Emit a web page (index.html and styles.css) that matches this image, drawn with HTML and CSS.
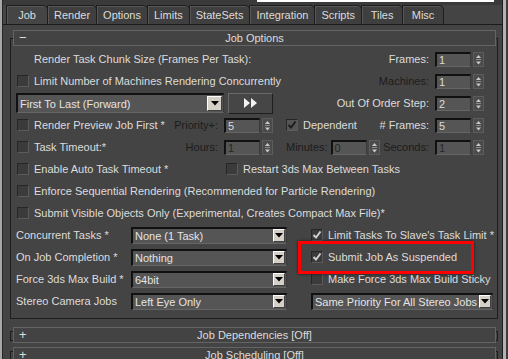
FILE: index.html
```html
<!DOCTYPE html>
<html lang="en">
<head>
  <meta charset="UTF-8" />
  <title>Job Options</title>
  <link rel="stylesheet" href="styles.css">
</head>
<body>
  <div class="app">
    <div class="edge-left"></div>
    <div class="main">
      <div class="topline"><span class="topline-white"></span></div>
      <div class="tabs">
        <div class="tab active">Job</div>
        <div class="tab">Render</div>
        <div class="tab">Options</div>
        <div class="tab">Limits</div>
        <div class="tab">StateSets</div>
        <div class="tab">Integration</div>
        <div class="tab">Scripts</div>
        <div class="tab">Tiles</div>
        <div class="tab">Misc</div>
      </div>
      <div class="panel">
        <div class="rollout">
          <div class="rollout-head"><span class="sign">&minus;</span><span class="title">Job Options</span></div>
          <div class="rollout-body">

            <div class="row">
              <span class="cb-space"></span>
              <span class="lbl">Render Task Chunk Size (Frames Per Task):</span>
              <div class="spin push">
                <span class="spin-lbl">Frames:</span><span class="num">1</span>
                <svg class="arrows" width="11" height="15" viewBox="0 0 11 15"><rect width="11" height="15" fill="#4b4b4b"/><rect x="0.5" y="0.5" width="10" height="14" fill="none" stroke="#5c5c5c"/><polygon points="3,6 8,6 5.5,3" fill="#c9c9c9"/><line x1="3" y1="7.5" x2="8" y2="7.5" stroke="#8a8a8a"/><polygon points="3,9.5 8,9.5 5.5,12.5" fill="#c9c9c9"/></svg>
              </div>
            </div>

            <div class="row">
              <span class="cb"></span>
              <span class="lbl">Limit Number of Machines Rendering Concurrently</span>
              <div class="spin push">
                <span class="spin-lbl dim">Machines:</span><span class="num">1</span>
                <svg class="arrows" width="11" height="15" viewBox="0 0 11 15"><rect width="11" height="15" fill="#4b4b4b"/><rect x="0.5" y="0.5" width="10" height="14" fill="none" stroke="#5c5c5c"/><polygon points="3,6 8,6 5.5,3" fill="#c9c9c9"/><line x1="3" y1="7.5" x2="8" y2="7.5" stroke="#8a8a8a"/><polygon points="3,9.5 8,9.5 5.5,12.5" fill="#c9c9c9"/></svg>
              </div>
            </div>

            <div class="row">
              <div class="select order">
                <span class="select-text">First To Last (Forward)</span>
                <span class="drop-btn big"><svg width="8" height="5" viewBox="0 0 8 5"><polygon points="0,0 8,0 4,4.5" fill="#000"/></svg></span>
              </div>
              <div class="ff-btn">
                <svg width="16" height="10" viewBox="0 0 16 10"><polygon points="1,0 7,5 1,10" fill="#f2f2f2"/><polygon points="8,0 14,5 8,10" fill="#f2f2f2"/></svg>
              </div>
              <div class="spin push">
                <span class="spin-lbl">Out Of Order Step:</span><span class="num">2</span>
                <svg class="arrows" width="11" height="15" viewBox="0 0 11 15"><rect width="11" height="15" fill="#4b4b4b"/><rect x="0.5" y="0.5" width="10" height="14" fill="none" stroke="#5c5c5c"/><polygon points="3,6 8,6 5.5,3" fill="#c9c9c9"/><line x1="3" y1="7.5" x2="8" y2="7.5" stroke="#8a8a8a"/><polygon points="3,9.5 8,9.5 5.5,12.5" fill="#c9c9c9"/></svg>
              </div>
            </div>

            <div class="row">
              <div class="lead">
                <span class="cb"></span>
                <span class="lbl">Render Preview Job First *</span>
                <div class="spin push">
                  <span class="spin-lbl dim">Priority+:</span><span class="num">5</span>
                  <svg class="arrows" width="11" height="15" viewBox="0 0 11 15"><rect width="11" height="15" fill="#4b4b4b"/><rect x="0.5" y="0.5" width="10" height="14" fill="none" stroke="#5c5c5c"/><polygon points="3,6 8,6 5.5,3" fill="#c9c9c9"/><line x1="3" y1="7.5" x2="8" y2="7.5" stroke="#8a8a8a"/><polygon points="3,9.5 8,9.5 5.5,12.5" fill="#c9c9c9"/></svg>
                </div>
              </div>
              <span class="cb checked off dep"><svg width="10" height="10" viewBox="0 0 10 10"><polyline points="1.5,5 4,7.5 8.5,1.5" fill="none" stroke="#1e1e1e" stroke-width="2"/></svg></span>
              <span class="lbl">Dependent</span>
              <div class="spin push">
                <span class="spin-lbl"># Frames:</span><span class="num">5</span>
                <svg class="arrows" width="11" height="15" viewBox="0 0 11 15"><rect width="11" height="15" fill="#4b4b4b"/><rect x="0.5" y="0.5" width="10" height="14" fill="none" stroke="#5c5c5c"/><polygon points="3,6 8,6 5.5,3" fill="#c9c9c9"/><line x1="3" y1="7.5" x2="8" y2="7.5" stroke="#8a8a8a"/><polygon points="3,9.5 8,9.5 5.5,12.5" fill="#c9c9c9"/></svg>
              </div>
            </div>

            <div class="row">
              <div class="lead">
                <span class="cb"></span>
                <span class="lbl">Task Timeout:*</span>
                <div class="spin push">
                  <span class="spin-lbl dim">Hours:</span><span class="num dim">1</span>
                  <svg class="arrows" width="11" height="15" viewBox="0 0 11 15"><rect width="11" height="15" fill="#4b4b4b"/><rect x="0.5" y="0.5" width="10" height="14" fill="none" stroke="#5c5c5c"/><polygon points="3,6 8,6 5.5,3" fill="#c9c9c9"/><line x1="3" y1="7.5" x2="8" y2="7.5" stroke="#8a8a8a"/><polygon points="3,9.5 8,9.5 5.5,12.5" fill="#c9c9c9"/></svg>
                </div>
              </div>
              <div class="spin minutes">
                <span class="spin-lbl dim">Minutes:</span><span class="num dim">0</span>
                <svg class="arrows" width="11" height="15" viewBox="0 0 11 15"><rect width="11" height="15" fill="#4b4b4b"/><rect x="0.5" y="0.5" width="10" height="14" fill="none" stroke="#5c5c5c"/><polygon points="3,6 8,6 5.5,3" fill="#c9c9c9"/><line x1="3" y1="7.5" x2="8" y2="7.5" stroke="#8a8a8a"/><polygon points="3,9.5 8,9.5 5.5,12.5" fill="#c9c9c9"/></svg>
              </div>
              <div class="spin push">
                <span class="spin-lbl dim">Seconds:</span><span class="num dim">1</span>
                <svg class="arrows" width="11" height="15" viewBox="0 0 11 15"><rect width="11" height="15" fill="#4b4b4b"/><rect x="0.5" y="0.5" width="10" height="14" fill="none" stroke="#5c5c5c"/><polygon points="3,6 8,6 5.5,3" fill="#c9c9c9"/><line x1="3" y1="7.5" x2="8" y2="7.5" stroke="#8a8a8a"/><polygon points="3,9.5 8,9.5 5.5,12.5" fill="#c9c9c9"/></svg>
              </div>
            </div>

            <div class="row">
              <div class="lead short">
                <span class="cb"></span>
                <span class="lbl">Enable Auto Task Timeout *</span>
              </div>
              <span class="cb"></span>
              <span class="lbl">Restart 3ds Max Between Tasks</span>
            </div>

            <div class="row">
              <span class="cb"></span>
              <span class="lbl">Enforce Sequential Rendering (Recommended for Particle Rendering)</span>
            </div>

            <div class="row">
              <span class="cb"></span>
              <span class="lbl">Submit Visible Objects Only (Experimental, Creates Compact Max File)*</span>
            </div>

            <div class="row">
              <span class="row-label">Concurrent Tasks *</span>
              <div class="select">
                <span class="select-text">None (1 Task)</span>
                <span class="drop-btn"><svg width="8" height="5" viewBox="0 0 8 5"><polygon points="0,0 8,0 4,4.5" fill="#000"/></svg></span>
              </div>
              <div class="opt">
                <span class="cb checked"><svg width="10" height="10" viewBox="0 0 10 10"><polyline points="1.5,5 4,7.5 8.5,1.5" fill="none" stroke="#cfcfcf" stroke-width="2"/></svg></span>
                <span class="lbl">Limit Tasks To Slave's Task Limit *</span>
              </div>
            </div>

            <div class="row">
              <span class="row-label">On Job Completion *</span>
              <div class="select">
                <span class="select-text">Nothing</span>
                <span class="drop-btn"><svg width="8" height="5" viewBox="0 0 8 5"><polygon points="0,0 8,0 4,4.5" fill="#000"/></svg></span>
              </div>
              <div class="opt flagged">
                <span class="cb checked"><svg width="10" height="10" viewBox="0 0 10 10"><polyline points="1.5,5 4,7.5 8.5,1.5" fill="none" stroke="#cfcfcf" stroke-width="2"/></svg></span>
                <span class="lbl">Submit Job As Suspended</span>
              </div>
            </div>

            <div class="row">
              <span class="row-label">Force 3ds Max Build *</span>
              <div class="select">
                <span class="select-text">64bit</span>
                <span class="drop-btn"><svg width="8" height="5" viewBox="0 0 8 5"><polygon points="0,0 8,0 4,4.5" fill="#000"/></svg></span>
              </div>
              <div class="opt">
                <span class="cb"></span>
                <span class="lbl">Make Force 3ds Max Build Sticky</span>
              </div>
            </div>

            <div class="row">
              <span class="row-label">Stereo Camera Jobs</span>
              <div class="select">
                <span class="select-text">Left Eye Only</span>
                <span class="drop-btn"><svg width="8" height="5" viewBox="0 0 8 5"><polygon points="0,0 8,0 4,4.5" fill="#000"/></svg></span>
              </div>
              <div class="select stereo">
                <span class="select-text">Same Priority For All Stereo Jobs</span>
                <span class="drop-btn"><svg width="8" height="5" viewBox="0 0 8 5"><polygon points="0,0 8,0 4,4.5" fill="#000"/></svg></span>
              </div>
            </div>

          </div>
        </div>

        <div class="rollout collapsed">
          <div class="rollout-head"><span class="sign">+</span><span class="title">Job Dependencies [Off]</span></div>
          <div class="rollout-body"></div>
        </div>
        <div class="rollout collapsed">
          <div class="rollout-head"><span class="sign">+</span><span class="title">Job Scheduling [Off]</span></div>
          <div class="rollout-body"></div>
        </div>
      </div>
    </div>
    <div class="edge-right"></div>
  </div>
</body>
</html>
```

FILE: styles.css
```css
html, body {
  margin: 0;
  padding: 0;
}
body {
  width: 508px;
  height: 359px;
  overflow: hidden;
  background-color: #444;
  font-family: "Liberation Sans", Arial, sans-serif;
  font-size: 11px;
  color: #dcdcdc;
}
.app {
  display: flex;
  height: 359px;
}
.edge-left {
  width: 2px;
  flex-shrink: 0;
  background-color: #a8a8a8;
}
.main {
  flex: 1;
  min-width: 0;
  border-left: 1px solid #262626;
}
.edge-right {
  width: 3px;
  flex-shrink: 0;
  border-left: 1px solid #1e1e1e;
  border-right: 2px solid #3c3c3c;
  background-color: #b2b2b2;
}
.topline {
  height: 5px;
  display: flex;
  justify-content: flex-end;
  padding-right: 8px;
  background-color: #3a3a3a;
}
.topline-white {
  width: 237px;
  height: 2px;
  background-color: #fff;
}

/* tabs */
.tabs {
  display: flex;
  height: 19px;
  padding-left: 3px;
  border-bottom: 1px solid #1b1b1b;
}
.tab {
  min-width: 42px;
  padding: 0 6px;
  box-sizing: border-box;
  text-align: center;
  line-height: 18px;
  background-color: #3f3f3f;
  border: 1px solid #1e1e1e;
  border-bottom: none;
  border-top-right-radius: 5px;
  box-shadow: inset 1px 1px 0 #575757;
  margin-right: -1px;
  color: #dcdcdc;
}
.tab.active {
  background-color: #454545;
}

/* rollouts */
.panel {
  padding-top: 5px;
}
.rollout {
  margin: 0 4px 0 7px;
}
.rollout-head {
  position: relative;
  z-index: 1;
  height: 16px;
  margin: 0 2px 0 3px;
  box-sizing: border-box;
  border: 1px solid #646464;
  background-color: #434343;
  display: flex;
  align-items: center;
}
.rollout-head .sign {
  width: 14px;
  padding-left: 5px;
  font-size: 13px;
  line-height: 14px;
}
.rollout-head .title {
  flex: 1;
  text-align: center;
  margin-right: 19px;
}
.rollout-body {
  margin-top: -8px;
  border: 1px solid #1d1d1d;
  padding: 9px 13px 6px 6px;
}
.rollout.collapsed {
  margin-top: 8px;
}
.rollout.collapsed + .rollout.collapsed {
  margin-top: 6px;
}
.rollout.collapsed .rollout-body {
  margin-top: -12px;
  height: 8px;
  padding: 0;
}

/* rows */
.row {
  display: flex;
  align-items: center;
  height: 22px;
  white-space: nowrap;
}
.lead {
  display: flex;
  align-items: center;
  width: 256px;
  flex-shrink: 0;
}
.lead.short {
  width: 209px;
}
.push {
  margin-left: auto;
}
.lbl {
  color: #dcdcdc;
}
.dim {
  color: #1c1c1c;
}
.cb-space {
  width: 12px;
  margin-right: 5px;
}
.cb {
  width: 12px;
  height: 12px;
  margin-right: 5px;
  flex-shrink: 0;
  box-sizing: border-box;
  background-color: #3b3b3b;
  border: 1px solid;
  border-color: #262626 #5b5b5b #5b5b5b #262626;
  display: flex;
  align-items: center;
  justify-content: center;
}
.cb.off {
  background-color: #555;
}
.cb.dep {
  margin-left: 13px;
}

/* spinners */
.spin {
  display: flex;
  align-items: center;
}
.spin-lbl {
  margin-right: 6px;
}
.spin.minutes {
  margin-left: 13px;
}
.spin.minutes .spin-lbl {
  margin-right: 3px;
}
.num {
  width: 36px;
  height: 15px;
  box-sizing: border-box;
  background-color: #555;
  border-style: solid;
  border-width: 2px 1px 1px 2px;
  border-color: #111 #3a3a3a #666 #111;
  padding-left: 2px;
  line-height: 12px;
  color: #dcdcdc;
}
.num.dim {
  color: #262626;
}
.arrows {
  margin-left: 2px;
  display: block;
}

/* dropdowns */
.select {
  display: flex;
  align-items: center;
  width: 156px;
  height: 17px;
  flex-shrink: 0;
  box-sizing: border-box;
  background-color: #555;
  border-style: solid;
  border-width: 2px 1px 1px 2px;
  border-color: #111 #3a3a3a #666 #111;
}
.select-text {
  flex: 1;
  padding-left: 2px;
  color: #e4e4e4;
}
.drop-btn {
  width: 12px;
  height: 13px;
  margin-right: 1px;
  box-sizing: border-box;
  background-color: #d4d0c8;
  border: 1px solid;
  border-color: #fff #404040 #404040 #fff;
  display: flex;
  align-items: center;
  justify-content: center;
}
.drop-btn.big {
  width: 15px;
  height: 15px;
}
.select.order {
  width: 208px;
  height: 20px;
  margin-left: -1px;
}
.select.stereo {
  width: 182px;
  margin-left: 24px;
  margin-right: -9px;
}
.ff-btn {
  width: 45px;
  height: 21px;
  margin-left: 4px;
  box-sizing: border-box;
  background-color: #464646;
  border: 1px solid;
  border-color: #6a6a6a #1e1e1e #1e1e1e #6a6a6a;
  display: flex;
  align-items: center;
  justify-content: center;
}
.row-label {
  width: 115px;
  margin-left: -1px;
  flex-shrink: 0;
}
.opt {
  display: flex;
  align-items: center;
  align-self: stretch;
  margin-left: 24px;
}
.opt.flagged {
  position: relative;
}
.opt.flagged::after {
  content: "";
  position: absolute;
  left: -13px;
  top: -5px;
  width: 176px;
  height: 33px;
  box-sizing: border-box;
  border: 3px solid #f00;
  box-shadow: 0 0 3px rgba(0,0,0,0.6);
}
```
